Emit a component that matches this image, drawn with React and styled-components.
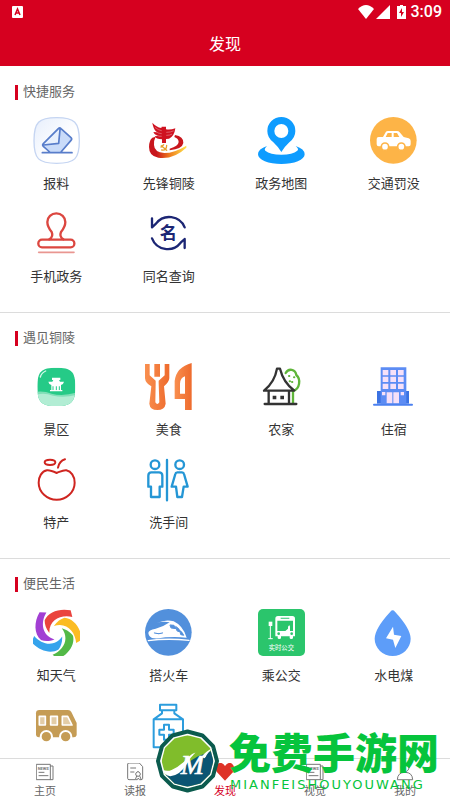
import React from 'react';
import styled, { createGlobalStyle, css } from 'styled-components';

const colours = {
  primary: '#d6001f',
  text: '#333',
  muted: '#666',
  line: '#dcdcdc',
  mark: '#06c43c',
};

const GlobalStyle = createGlobalStyle`
  * {
    box-sizing: border-box;
  }

  body {
    margin: 0;
    background: #fff;
    font-family: Roboto, 'Noto Sans CJK SC', sans-serif;
    color: ${colours.text};
  }
`;

const Page = styled.div`
  position: relative;
  display: flex;
  flex-direction: column;
  height: 100vh;
  overflow: hidden;
`;

const Header = styled.header`
  flex: none;
  background: ${colours.primary};
  color: #fff;
`;

const StatusBar = styled.div`
  display: flex;
  align-items: center;
  height: 23px;
  padding: 0 8px 0 12px;
  font-size: 16px;
  line-height: 23px;
  font-weight: 500;

  svg {
    display: block;
  }
`;

const StatusIcons = styled.div`
  display: flex;
  align-items: center;
  margin-left: auto;
  margin-right: 4px;
  gap: 2px;
`;

const Title = styled.h1`
  margin: 0;
  font-size: 16px;
  font-weight: 400;
  line-height: 43px;
  text-align: center;
`;

const Main = styled.main`
  flex: 1;
  min-height: 0;
  overflow-y: auto;
  scrollbar-width: none;
`;

const Section = styled.section`
  padding: 15px 0 25px;
  border-top: 1px solid ${colours.line};

  &:first-child {
    border-top-color: transparent;
  }
`;

const Heading = styled.h2`
  display: flex;
  align-items: center;
  gap: 5px;
  margin: 0 0 15px;
  padding-left: 15px;
  font-size: 13px;
  font-weight: 400;
  line-height: 20px;
  color: ${colours.muted};

  &:before {
    content: '';
    width: 3px;
    height: 15px;
    background: ${colours.primary};
  }
`;

const Grid = styled.div`
  display: grid;
  grid-template-columns: repeat(4, 1fr);
  row-gap: 16px;
`;

const Item = styled.a`
  display: flex;
  flex-direction: column;
  align-items: center;
  gap: 10px;
  font-size: 13px;
  line-height: 20px;
  color: ${colours.text};
  text-decoration: none;
`;

const Icon = styled.svg`
  display: block;
  width: 47px;
  height: 47px;
  fill: none;
  stroke-linecap: round;
  stroke-linejoin: round;
`;

const TabBar = styled.nav`
  flex: none;
  display: flex;
  height: 42px;
  border-top: 1px solid ${colours.line};
  background: #fff;
`;

const Tab = styled.button`
  flex: 1;
  display: flex;
  flex-direction: column;
  align-items: center;
  padding: 4px 0 0;
  gap: 3px;
  border: none;
  background: transparent;
  font-family: inherit;
  font-size: 11px;
  line-height: 16px;
  color: ${colours.muted};
  cursor: pointer;
  ${props => props.$active && css`
    color: ${colours.primary};
  `}
`;

const TabIcon = styled.svg`
  display: block;
  width: 18px;
  height: 18px;
  fill: none;
  stroke: #777;
  stroke-width: 3;
  stroke-linecap: round;
  stroke-linejoin: round;
`;

const Watermark = styled.div`
  position: absolute;
  right: 11px;
  bottom: 5px;
  display: flex;
  align-items: flex-start;
  gap: 9px;
  color: ${colours.mark};
  pointer-events: none;
`;

const MarkLogo = styled.svg`
  display: block;
  width: 65px;
  height: 64px;
`;

const MarkName = styled.div`
  font-family: 'Noto Sans CJK SC', sans-serif;
  font-size: 42px;
  font-weight: 900;
  line-height: 44px;
`;

const MarkSite = styled.div`
  font-family: 'DejaVu Sans', sans-serif;
  font-size: 13px;
  line-height: 20px;
  letter-spacing: 2px;
  padding: 2px 0 0 1px;
`;

const ReportIcon = () => (
  <Icon viewBox="0 0 141 141">
    <defs>
      <linearGradient id="report" x1="0" y1="0" x2="1" y2="1">
        <stop offset="0" stopColor="#e6eefc" />
        <stop offset=".6" stopColor="#fff" />
      </linearGradient>
    </defs>
    <path d="M71 2c54 0 68 14 68 69s-14 68-68 68-68-13-68-68S17 2 71 2z" fill="url(#report)" stroke="#c5d5f2" strokeWidth="4" />
    <path d="M31 80 76 35q4-4 8 0l30 27q4 4 0 8L84 105H50L31 88q-4-4 0-8z" fill="#c9dbf9" />
    <path d="M31 82 80 36 76 78z" fill="#e8f0fd" />
    <path d="M50 105 31 88q-4-4 0-8L76 35q4-4 8 0l30 27q4 4 0 8L84 105M32 84l45-5 4-41M28 107h89" stroke="#587dca" strokeWidth="5" />
  </Icon>
);

const PioneerIcon = () => (
  <Icon viewBox="0 0 141 141">
    <defs>
      <linearGradient id="swoosh">
        <stop offset=".2" stopColor="#c8161d" />
        <stop offset=".55" stopColor="#ee7b1c" />
        <stop offset="1" stopColor="#ffe34a" />
      </linearGradient>
    </defs>
    <path d="M22 62Q12 70 12 90q0 28 28 32 46 6 84-30v-6q-36 22-66 22-30-2-31-24-1-14 5-25z" fill="url(#swoosh)" />
    <path d="M90 54q26 4 25 24-3 18-41 22v-5q26-8 27-20 0-10-13-15z" fill="#c8161d" />
    <path d="M22 17q12 13 27 16l1-4h13v8q14 2 28-3-3 24-19 31l-9 1v12H51V67q-18 0-22-9l9-1q-11-4-13-12l10 1Q24 34 22 17z" fill="#cf1220" />
    <path d="M31 32q10 8 18 9M33 44q8 6 16 6M35 55q8 4 14 3M65 46q12 0 20-4M65 55q10 0 15-3" stroke="#fff" strokeWidth="1" />
    <path d="M50 99q15 3 15-14M49 86l16 14M48 90l8-7" stroke="#e6a12c" strokeWidth="4" />
  </Icon>
);

const MapIcon = () => (
  <Icon viewBox="0 0 141 141">
    <path d="M70 105Q61 90 46 76 28 62 28 42a42 42 0 0 1 84 0q0 20-18 34Q79 90 70 105zM70 21a21 21 0 1 0 0 42 21 21 0 0 0 0-42z" fill="#0e9cff" fillRule="evenodd" />
    <path d="M27 87Q0 96 0 112a70 29 0 0 0 140 0q0-16-27-25 11 9 5 14-14 12-48 12t-48-12q-5-5 5-14z" fill="#0e9cff" />
  </Icon>
);

const TrafficIcon = () => (
  <Icon viewBox="0 0 141 141">
    <circle cx="70" cy="70" r="70" fill="#fdb447" />
    <path d="M39 60 47 46q2-4 7-4h27q5 0 8 4l12 14 15 4q6 2 6 8v10q0 6-6 6H26q-6 0-6-6V66q0-6 6-6z" fill="#fff" />
    <path d="M53 48h12v12H47zM71 48h10l7 12H71z" fill="#fdb447" />
    <circle cx="45" cy="89" r="11" fill="#fff" stroke="#fdb447" strokeWidth="5" />
    <circle cx="94" cy="89" r="11" fill="#fff" stroke="#fdb447" strokeWidth="5" />
  </Icon>
);

const StampIcon = () => (
  <Icon viewBox="0 0 141 141" stroke="#dc4740" strokeWidth="7">
    <path d="M49 88q13-8 7-22-13-16-13-30a27 26 0 0 1 54 0q0 14-13 30-6 14 7 22" />
    <rect x="16" y="89" width="108" height="23" rx="11" />
    <path d="M17 127h106" stroke="#e99691" strokeWidth="5" />
  </Icon>
);

const NameIcon = () => (
  <Icon viewBox="0 0 141 141" stroke="#1c2674" strokeWidth="7">
    <path d="M21 25v27l12-11a50 50 0 0 1 86 11M119 114V87l-12 11a50 50 0 0 1-86-13" />
    <text x="70" y="88" textAnchor="middle" fontSize="52" fontWeight="700" fill="#1c2674" stroke="none">名</text>
  </Icon>
);

const ScenicIcon = () => (
  <Icon viewBox="0 0 141 141">
    <defs>
      <clipPath id="scenic">
        <path d="M70 14c44 0 57 10 57 57s-13 58-57 58-57-11-57-58 13-57 57-57z" />
      </clipPath>
    </defs>
    <g clipPath="url(#scenic)">
      <path d="M0 0h141v141H0z" fill="#25ca87" />
      <path d="M0 88q30-6 56 4 36 10 85-6v55H0z" fill="#7fdfb7" />
      <path d="M0 98q30-12 60 0 40 8 81-6v49H0z" fill="#b2edd4" />
    </g>
    <path d="M22 42q3-12 16-18" stroke="#d8f7ea" strokeWidth="4" />
    <path d="M57 44h25v7h-4l3 5h12q-2 9-9 10v15h4v4H51v-4h4V66q-7-1-9-10h12l3-5h-4z" fill="#fff" />
    <path d="M60 71v9M70 71v9M79 71v9" stroke="#25ca87" strokeWidth="3" />
  </Icon>
);

const FoodIcon = () => (
  <Icon viewBox="0 0 141 141">
    <defs>
      <linearGradient id="food">
        <stop offset="0" stopColor="#f98f4f" />
        <stop offset="1" stopColor="#ee6b2d" />
      </linearGradient>
    </defs>
    <path d="M0 3h14v34l18 16v8l-1 57q6 10 12 0l-2-57v-8l18-16V3h14v43q-1 12-16 24l5 52q-3 19-25 19t-24-19l6-52Q1 60 0 46zM28 3h17v38H28z" fill="url(#food)" />
    <path d="M140 0v141h-20v-33H89V54q5-42 51-54zM120 40q-14 4-15 22v30h15z" fill="url(#food)" fillRule="evenodd" />
  </Icon>
);

const FarmIcon = () => (
  <Icon viewBox="0 0 141 141" strokeWidth="7">
    <path d="M83 30c9-16 29-11 32 6 14 12 11 43-10 47v39" stroke="#5fb53a" />
    <path d="M93 39h1M102 57h1M108 43h1M95 55h1" stroke="#5fb53a" strokeWidth="6" />
    <path d="M57 17h9q10 41 43 66H18q32-25 39-66zM32 84v38M93 84v38M20 123h95" stroke="#333" />
    <path d="M44 98h11v11H44zM67 98h11v11H67z" fill="#333" />
  </Icon>
);

const HotelIcon = () => (
  <Icon viewBox="0 0 141 141">
    <path d="M21 84h96v38H21z" fill="#3b72e2" />
    <path d="M32 13h77v109H32z" fill="#5c8cf4" />
    <path d="M38 21h17v16H38zM61 21h17v16H61zM84 21h17v16H84zM38 41h17v16H38zM61 41h17v16H61zM84 41h17v16H84zM38 62h17v16H38zM61 62h17v16H61zM84 62h17v16H84zM50 88h17v33H50zM70 88h17v33H70zM36 87h10v10H36zM92 87h10v10H92z" fill="#f6e0f8" />
    <path d="M12 125h114" stroke="#4c81f0" strokeWidth="6" />
  </Icon>
);

const AppleIcon = () => (
  <Icon viewBox="0 0 141 141" stroke="#cf2520" strokeWidth="6">
    <path d="M71 51c-15-7-21-9-29-8-16 3-25 19-25 37 0 28 25 51 54 51s54-23 54-51c0-20-11-34-25-37-10-1-16 3-29 8zM75 35q4-20 21-25" />
    <ellipse cx="51" cy="19" rx="16" ry="8" />
  </Icon>
);

const ToiletIcon = () => (
  <Icon viewBox="0 0 141 141" stroke="#2496d5" strokeWidth="7">
    <circle cx="30" cy="26" r="13" />
    <circle cx="104" cy="26" r="13" />
    <path d="M19 49h23q10 0 10 10v33h-8v31H18V92h-8V59q0-10 9-10zM66 12v121M97 49h14q5 0 6 5l11 38h-12l-5 31H97l-4-31H80l11-38q1-5 6-5z" />
  </Icon>
);

const petals = ['#ea443e', '#fbbc23', '#52b947', '#35a3ec', '#a23fd3'];

const WeatherIcon = () => (
  <Icon viewBox="0 0 141 141">
    {petals.map((fill, i) => (
      <path
        key={fill}
        d="M113 4l5 20C84 16 48 32 49 72 38 58 35 46 35 34 46 8 80-3 113 4z"
        fill={fill}
        transform={`rotate(${i * 72} 70 71)`} />
    ))}
  </Icon>
);

const TrainIcon = () => (
  <Icon viewBox="0 0 141 141">
    <circle cx="70" cy="70" r="70" fill="#5290dc" />
    <path d="M10 72q0-9 22-13 24-6 42-19-20-4-38 2 26-12 50-5 28 13 39 49-30-4-64-1-24 5-40 2-10-5-11-15z" fill="#fff" />
    <path d="M76 48l11 1 6 10-14-2zM93 53l8 6 5 10-9-3zM106 66l5 4 5 9-8-2zM28 72q14 5 25 0" stroke="#5290dc" strokeWidth="3" fill="#5290dc" />
    <path d="M10 95q56-8 122-1" stroke="#fff" strokeWidth="4" />
  </Icon>
);

const BusIcon = () => (
  <Icon viewBox="0 0 141 141">
    <rect width="141" height="141" rx="15" fill="#2bc56c" />
    <path d="M60 21h43q8 0 8 8v53h-6v5q0 3-5 3t-5-3v-5H69v5q0 3-5 3t-5-3v-5h-7V29q0-8 8-8z" fill="#fff" />
    <path d="M58 35h47v31H96V53q-1-9-6 0v6l-8 7H58zM68 26h26v3H68z" fill="#2bc56c" />
    <circle cx="62" cy="74" r="4" fill="#2bc56c" />
    <circle cx="101" cy="74" r="4" fill="#2bc56c" />
    <path d="M32 38h11v13H32z" fill="#fff" />
    <path d="M37 50v38M32 89h11" stroke="#fff" strokeWidth="3" />
    <text x="70" y="123" textAnchor="middle" fontSize="19" fill="#fff">实时公交</text>
  </Icon>
);

const UtilityIcon = () => (
  <Icon viewBox="0 0 141 141">
    <path d="M61 8q7-8 14 0 47 51 47 81a54 52 0 0 1-108 0q0-30 47-81z" fill="#5d9df9" />
    <path d="M69 53 48 88l21 4 7 25 18-36-22-4z" fill="#fff" />
  </Icon>
);

const CoachIcon = () => (
  <Icon viewBox="0 0 141 141">
    <path d="M19 24h86q7 0 10 6l16 33v34q0 9-9 9H18q-9 0-9-9V34q0-10 10-10z" fill="#c59c55" />
    <path d="M19 43h18v26H19zM53 43h20v26H53zM88 43h16l13 26H88z" fill="#e3cda7" stroke="#fff" strokeWidth="5" />
    <circle cx="40" cy="104" r="17" fill="#c59c55" stroke="#fff" strokeWidth="6" />
    <circle cx="98" cy="104" r="17" fill="#c59c55" stroke="#fff" strokeWidth="6" />
  </Icon>
);

const MedicineIcon = () => (
  <Icon viewBox="0 0 141 141" stroke="#2c9ddd" strokeWidth="6">
    <path d="M45 8h49v17H45zM51 26v8L26 52v84h88V52L88 34v-8M26 52h88M57 68h15v15h14v15H72v15H57V98H43V83h14z" />
  </Icon>
);

const PaperIcon = () => (
  <TabIcon viewBox="0 0 54 54">
    <path d="M2 4h41v46H2zM43 9h8v41h-8M9 28h15M9 38h27" />
    <text x="22" y="22" textAnchor="middle" fontSize="12" fontWeight="700" fill="#777" stroke="none">NEWS</text>
  </TabIcon>
);

const ReadIcon = () => (
  <TabIcon viewBox="0 0 54 54">
    <path d="M26 50H9q-4 0-4-4V3q0-3 4-3h31l10 11v35q0 4-4 4M14 15h15M14 27h10M36 26a7 7 0 1 0 .1 0M32 39l-4 11h6l3-5 3 5h6l-5-11" />
  </TabIcon>
);

const HeartIcon = () => (
  <TabIcon viewBox="0 0 54 54">
    <path d="M27 53 2 26Q-5 13 6 2q12-7 21 7Q37-5 48 2q11 11 4 24z" fill="#de3327" stroke="none" />
  </TabIcon>
);

const PersonIcon = () => (
  <TabIcon viewBox="0 0 54 54">
    <circle cx="27" cy="14" r="12" />
    <path d="M4 49q1-21 23-21t23 21z" />
  </TabIcon>
);

const sections = [
  {
    title: '快捷服务',
    items: [
      { label: '报料', icon: ReportIcon },
      { label: '先锋铜陵', icon: PioneerIcon },
      { label: '政务地图', icon: MapIcon },
      { label: '交通罚没', icon: TrafficIcon },
      { label: '手机政务', icon: StampIcon },
      { label: '同名查询', icon: NameIcon },
    ],
  },
  {
    title: '遇见铜陵',
    items: [
      { label: '景区', icon: ScenicIcon },
      { label: '美食', icon: FoodIcon },
      { label: '农家', icon: FarmIcon },
      { label: '住宿', icon: HotelIcon },
      { label: '特产', icon: AppleIcon },
      { label: '洗手间', icon: ToiletIcon },
    ],
  },
  {
    title: '便民生活',
    items: [
      { label: '知天气', icon: WeatherIcon },
      { label: '搭火车', icon: TrainIcon },
      { label: '乘公交', icon: BusIcon },
      { label: '水电煤', icon: UtilityIcon },
      { name: '汽车', icon: CoachIcon },
      { name: '医药', icon: MedicineIcon },
    ],
  },
];

const tabs = [
  { label: '主页', icon: PaperIcon },
  { label: '读报', icon: ReadIcon },
  { label: '发现', icon: HeartIcon },
  { label: '视觉', icon: PaperIcon },
  { label: '我的', icon: PersonIcon },
];

// twelve-sided badge outline around (98, 96)
const badge = radius => Array.from({ length: 12 }, (_, i) => {
  const angle = (i * Math.PI) / 6;
  return `${Math.round(98 + radius * Math.cos(angle))},${Math.round(96 + radius * Math.sin(angle))}`;
}).join(' ');

const Logo = () => (
  <MarkLogo viewBox="0 0 196 192">
    <defs>
      <clipPath id="badge">
        <polygon points={badge(78)} />
      </clipPath>
    </defs>
    <polygon points={badge(89)} fill="#fff" stroke="#0b5b4e" strokeWidth="12" strokeLinejoin="round" />
    <g clipPath="url(#badge)">
      <path d="M0 0h196v192H0z" fill="#80bd2b" />
      <path d="M10 192 34 136q40 0 66-36l30-18 50-20v130z" fill="#0b5573" />
    </g>
    <path d="M22 121q13 8 28 2 28-12 52-40 10-11 20-13-15 14-27 36-20 34-49 36-18-2-24-21z" fill="#fff" />
    <path d="M140 84q14-20 34-26-14 10-24 30z" fill="#fff" />
    <text x="78" y="136" fontFamily="Liberation Serif, serif" fontStyle="italic" fontSize="84" fill="#fff" stroke="#fff" strokeWidth="2">M</text>
  </MarkLogo>
);

export default class App extends React.Component {
  constructor() {
    super();

    this.state = {
      tab: 2,
    };
  }

  render() {
    return (
      <Page>
        <GlobalStyle />
        <Header>
          <StatusBar>
            <svg width="11" height="12" viewBox="0 0 11 12">
              <rect width="11" height="12" rx="1" fill="#fff" />
              <path d="M3 9 5.500 3 8 9M4 7h3" fill="none" stroke={colours.primary} strokeWidth="1.500" />
            </svg>
            <StatusIcons>
              <svg width="16" height="14" viewBox="0 0 16 14">
                <path d="M8 14 0 4q8-8 16 0z" fill="#fff" />
              </svg>
              <svg width="14" height="14" viewBox="0 0 14 14">
                <path d="M14 0v14H0z" fill="#fff" />
              </svg>
              <svg width="15" height="14" viewBox="0 0 15 14">
                <path d="M8 0h3v1h3v13H5V1h3z" fill="#fff" />
                <path d="M10 3 7 8h2v4l3-5h-2z" fill={colours.primary} />
              </svg>
            </StatusIcons>
            3:09
          </StatusBar>
          <Title>发现</Title>
        </Header>
        <Main>
          {sections.map(section => (
            <Section key={section.title}>
              <Heading>{section.title}</Heading>
              <Grid>
                {section.items.map(item => (
                  <Item key={item.label || item.name} href="#" aria-label={item.name}>
                    <item.icon />
                    {item.label}
                  </Item>
                ))}
              </Grid>
            </Section>
          ))}
        </Main>
        <TabBar>
          {tabs.map((tab, i) => (
            <Tab
              key={tab.label}
              $active={this.state.tab === i}
              onClick={() => this.setState({ tab: i })}>
              <tab.icon />
              {tab.label}
            </Tab>
          ))}
        </TabBar>
        <Watermark>
          <Logo />
          <div>
            <MarkName>免费手游网</MarkName>
            <MarkSite>MIANFEISHOUYOUWANG</MarkSite>
          </div>
        </Watermark>
      </Page>
    );
  }
}
